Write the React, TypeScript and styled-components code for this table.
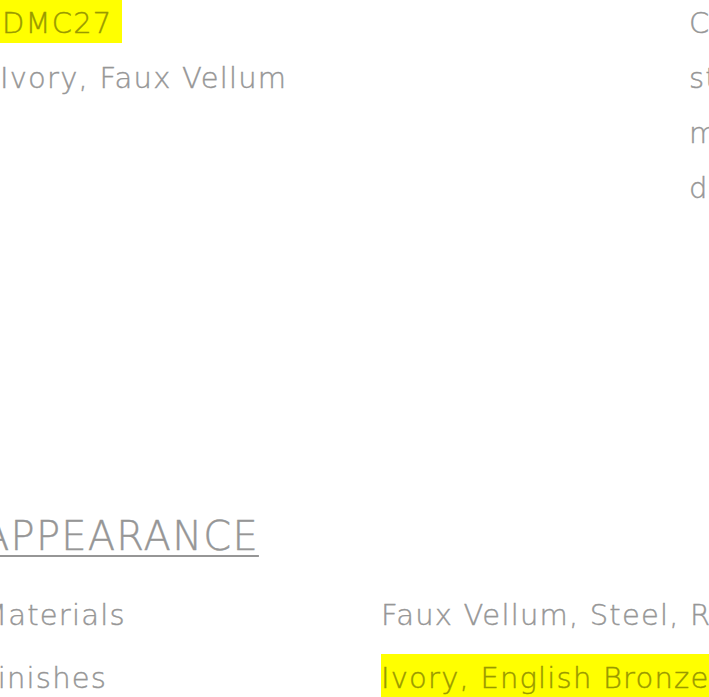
import React from "react";
import styled, { createGlobalStyle } from "styled-components";

const GlobalStyle = createGlobalStyle`
  html, body {
    margin: 0;
    padding: 0;
    background: #ffffff;
    overflow: hidden;
  }
  body {
    font-family: "DejaVu Sans", "Open Sans", sans-serif;
    font-weight: 200;
    color: #969696;
    -webkit-text-stroke: 0.4px currentColor;
  }
`;

const Page = styled.div`
  width: 709px;
  height: 697px;
  overflow: hidden;
`;

const Overview = styled.section`
  display: flex;
  margin-top: -4px;
  height: 219px;
`;

const SpecCol = styled.div`
  width: 689px;
  flex: none;
  display: flex;
  flex-direction: column;
`;

const SpecLine = styled.div`
  font-size: 29px;
  letter-spacing: 1.2px;
  line-height: 55px;
  height: 55px;
  white-space: nowrap;
`;

const CodeMark = styled.span`
  display: inline-block;
  background: #ffff00;
  color: #999900;
  padding: 0 9px 0 2px;
  height: 47px;
  line-height: 55px;
  margin-top: -4px;
`;

const Description = styled.p`
  margin: 0;
  font-size: 29px;
  letter-spacing: 1.2px;
  line-height: 55px;
  white-space: pre;
`;

const Appearance = styled.section`
  margin-top: 296px;
  margin-left: -18px;
`;

const Heading = styled.h2`
  margin: 0;
  font-weight: 200;
  font-size: 40px;
  letter-spacing: 1.2px;
  line-height: 50px;
  text-decoration: underline;
  text-decoration-thickness: 2px;
  text-underline-offset: 5px;
`;

const SpecTable = styled.div`
  display: grid;
  grid-template-columns: 399px 1fr;
  row-gap: 8px;
  margin-top: 27px;
`;

const Cell = styled.div`
  font-size: 29px;
  letter-spacing: 1.2px;
  line-height: 55px;
  white-space: nowrap;
`;

const ValueMark = styled.span<{ $marked?: boolean }>`
  display: inline-block;
  line-height: 55px;
  padding-right: 10px;
  background-image: ${(p) =>
    p.$marked
      ? "linear-gradient(transparent 3px, #ffff00 3px)"
      : "none"};
  color: ${(p) => (p.$marked ? "#999900" : "inherit")};
`;

const rows = [
  { label: "Materials", value: "Faux Vellum, Steel, Resin", marked: false },
  { label: "Finishes", value: "Ivory, English Bronze", marked: true },
];

export default function App() {
  return (
    <Page>
      <GlobalStyle />
      <Overview>
        <SpecCol>
          <SpecLine>
            <CodeMark>DMC27</CodeMark>
          </SpecLine>
          <SpecLine>Ivory, Faux Vellum</SpecLine>
        </SpecCol>
        <Description>
          {"Classic lantern silhouette with\nsteel frame and faux vellum shade,\nmade for covered porches and\ndoorways."}
        </Description>
      </Overview>
      <Appearance>
        <Heading>APPEARANCE</Heading>
        <SpecTable>
          {rows.map((r) => (
            <React.Fragment key={r.label}>
              <Cell>{r.label}</Cell>
              <Cell>
                <ValueMark $marked={r.marked}>{r.value}</ValueMark>
              </Cell>
            </React.Fragment>
          ))}
        </SpecTable>
      </Appearance>
    </Page>
  );
}
